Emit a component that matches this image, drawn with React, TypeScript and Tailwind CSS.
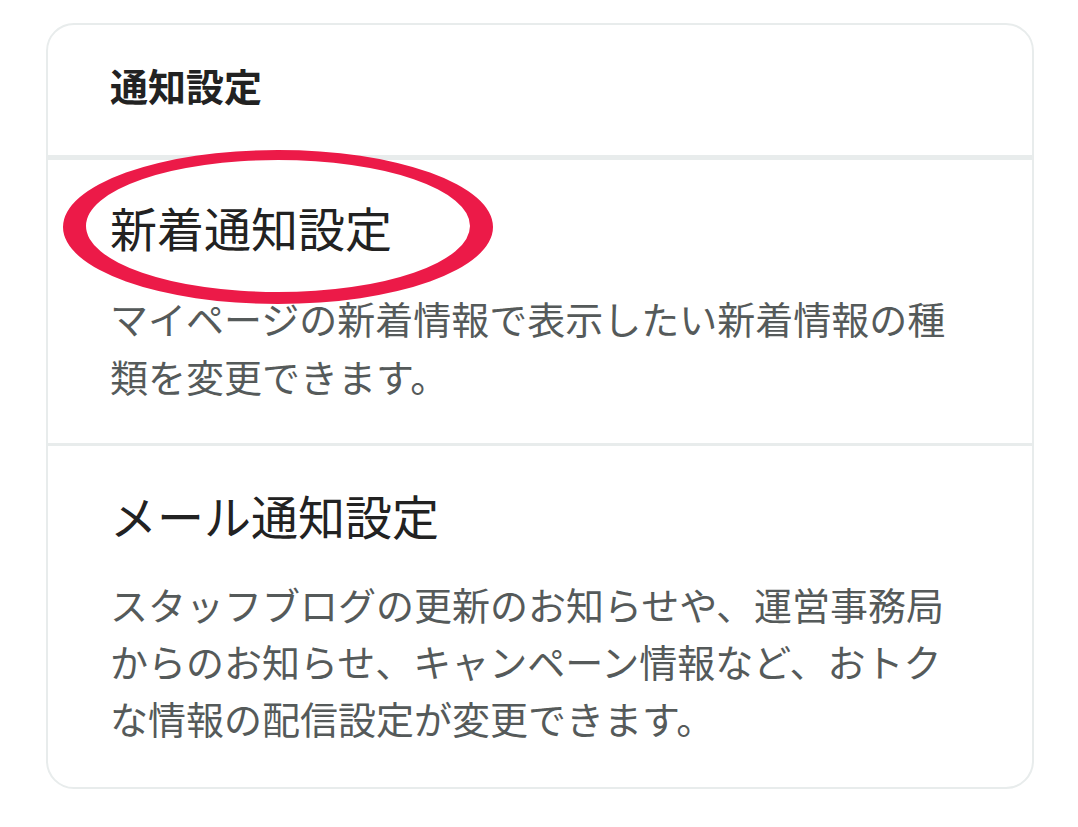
import React from 'react';

const jp = { fontFamily: '"Noto Sans CJK JP", "Noto Sans", sans-serif' };

function Item({ title, desc, pt, gap, pb, lh }: { title: string; desc: string; pt: string; gap: string; pb: string; lh: string }) {
    return (
        <div className={`${pt} ${pb} pl-[62px] pr-[60px]`}>
            <div className="text-[47px] leading-[72px] text-[#222]">{title}</div>
            <p className={`${gap} text-[38px] ${lh} text-[#555a5a]`}>{desc}</p>
        </div>
    );
}

export default function App() {
    return (
        <div className="w-[1078px] h-[827px] bg-white pt-[23px] pl-[46px]" style={jp}>
            <div className="relative w-[988px] rounded-[28px] border-2 border-[#e8ecec] bg-white">
                <div className="pt-[30px] pb-[40px] pl-[62px] border-b-[5px] border-[#e8ecec]">
                    <h1 className="text-[38px] leading-[60px] font-bold text-[#222]">通知設定</h1>
                </div>
                <div className="border-b-[3px] border-[#e8ecec]">
                    <Item
                        title="新着通知設定"
                        desc="マイページの新着情報で表示したい新着情報の種類を変更できます。"
                        pt="pt-[31px]"
                        gap="mt-[26px]"
                        pb="pb-[38px]"
                        lh="leading-[58px]"
                    />
                </div>
                <Item
                    title="メール通知設定"
                    desc="スタッフブログの更新のお知らせや、運営事務局からのお知らせ、キャンペーン情報など、おトクな情報の配信設定が変更できます。"
                    pt="pt-[33px]"
                    gap="mt-[24px]"
                    pb="pb-[41px]"
                    lh="leading-[57px]"
                />
                {/* red marker circle around 新着通知設定 */}
                <svg className="absolute left-[-48px] top-[-25px] pointer-events-none" width="1078" height="400">
                    <path
                        fillRule="evenodd"
                        fill="#ec1a48"
                        d="M63 227 A215 77 0 1 0 493 227 A215 77 0 1 0 63 227 Z M86 226 A192 66 0 1 0 470 226 A192 66 0 1 0 86 226 Z"
                    />
                </svg>
            </div>
        </div>
    );
}
